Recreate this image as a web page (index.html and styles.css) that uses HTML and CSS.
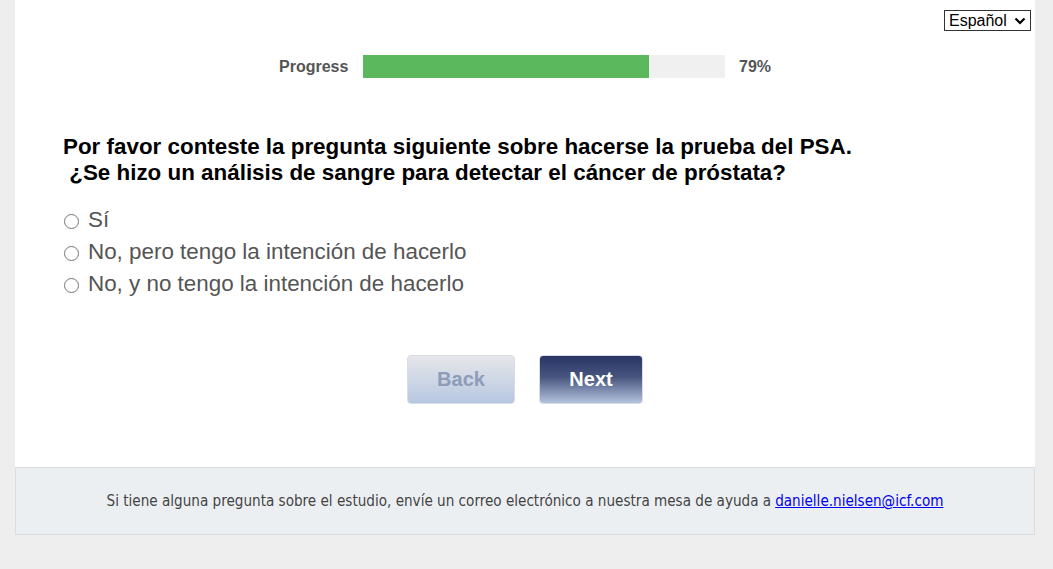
FILE: index.html
```html
<!DOCTYPE html>
<html>
<head>
    <title>Survey</title>
    <link rel="stylesheet" href="styles.css">
</head>
<body>
    <div class="page">
        <div class="container">
            <div class="lang-row">
                <span class="lang-wrap">
                    <select class="lang">
                        <option>Español</option>
                        <option>English</option>
                    </select>
                    <svg class="lang-arrow" width="12" height="8" viewBox="0 0 12 8">
                        <path d="M1.5 1.5 L6 6 L10.5 1.5" fill="none" stroke="#000" stroke-width="2.2"/>
                    </svg>
                </span>
            </div>

            <div class="progress">
                <span class="progress-label">Progress</span>
                <div class="progress-track">
                    <div class="progress-fill" style="width: 79%;"></div>
                </div>
                <span class="progress-value">79%</span>
            </div>

            <div class="question">
                <p class="question-text">Por favor conteste la pregunta siguiente sobre hacerse la prueba del PSA.<br>&nbsp;¿Se hizo un análisis de sangre para detectar el cáncer de próstata?</p>
                <label class="option"><input type="radio" name="psa"> Sí</label>
                <label class="option"><input type="radio" name="psa"> No, pero tengo la intención de hacerlo</label>
                <label class="option"><input type="radio" name="psa"> No, y no tengo la intención de hacerlo</label>
            </div>

            <div class="nav">
                <button type="button" class="btn btn-back">Back</button>
                <button type="button" class="btn btn-next">Next</button>
            </div>
        </div>

        <div class="footer">
            Si tiene alguna pregunta sobre el estudio, envíe un correo electrónico a nuestra mesa de ayuda a <a href="#">danielle.nielsen@icf.com</a>
        </div>
    </div>
</body>
</html>
```

FILE: styles.css
```css
body {
    margin: 0;
    padding: 0;
    background-color: #eeeeee;
    font-family: Arial, "Liberation Sans", sans-serif;
}

.page {
    width: 1020px;
    margin: 0 0 0 15px;
}

.container {
    background-color: #fff;
    height: 467px;
    box-sizing: border-box;
    padding-top: 10px;
}

.lang-row {
    display: flex;
    justify-content: flex-end;
    padding-right: 4px;
}

.lang-wrap {
    position: relative;
    display: inline-block;
    height: 21px;
}

.lang {
    -webkit-appearance: none;
    appearance: none;
    font-family: Arial, "Liberation Sans", sans-serif;
    font-size: 16px;
    width: 87px;
    height: 21px;
    padding: 0 0 0 4px;
    border: 1px solid #333;
    border-radius: 0;
    background: #fff;
    color: #000;
}

.lang-arrow {
    position: absolute;
    right: 5px;
    top: 7px;
    pointer-events: none;
}

.progress {
    display: flex;
    align-items: center;
    margin-top: 24px;
    margin-left: 264px;
}

.progress-label {
    font-size: 16px;
    font-weight: bold;
    color: #555;
    width: 84px;
}

.progress-track {
    width: 362px;
    height: 23px;
    background-color: #f0f0f0;
}

.progress-fill {
    height: 100%;
    background-color: #5cb85c;
}

.progress-value {
    font-size: 16px;
    font-weight: bold;
    color: #555;
    margin-left: 14px;
}

.question {
    padding-left: 48px;
    margin-top: 56px;
}

.question-text {
    margin: 0 0 18px 0;
    font-size: 22.4px;
    font-weight: bold;
    line-height: 26px;
    color: #000;
}

.option {
    display: flex;
    align-items: center;
    font-size: 22.4px;
    line-height: 32px;
    color: #555;
}

.option input {
    width: 15px;
    height: 15px;
    margin: 3px 9px 0 1px;
}

.nav {
    display: flex;
    justify-content: center;
    gap: 24px;
    margin-top: 55px;
}

.btn {
    height: 49px;
    font-family: Arial, "Liberation Sans", sans-serif;
    font-size: 20px;
    font-weight: bold;
    border: 1px solid #d8dce4;
    border-radius: 4px;
    cursor: pointer;
}

.btn-back {
    width: 108px;
    color: #8e9cb8;
    background: linear-gradient(#e6e7ea, #b7c7e1);
}

.btn-next {
    width: 104px;
    color: #fff;
    background: linear-gradient(#283565, #48557f 45%, #b4c3de);
}

.footer {
    height: 68px;
    box-sizing: border-box;
    border: 1px solid #dcdcdc;
    background-color: #eceff2;
    display: flex;
    align-items: center;
    justify-content: center;
    font-family: Tahoma, "DejaVu Sans Condensed", sans-serif;
    font-size: 15.1px;
    color: #444;
}

.footer a {
    color: #0000ee;
    margin-left: 4px;
}
```
